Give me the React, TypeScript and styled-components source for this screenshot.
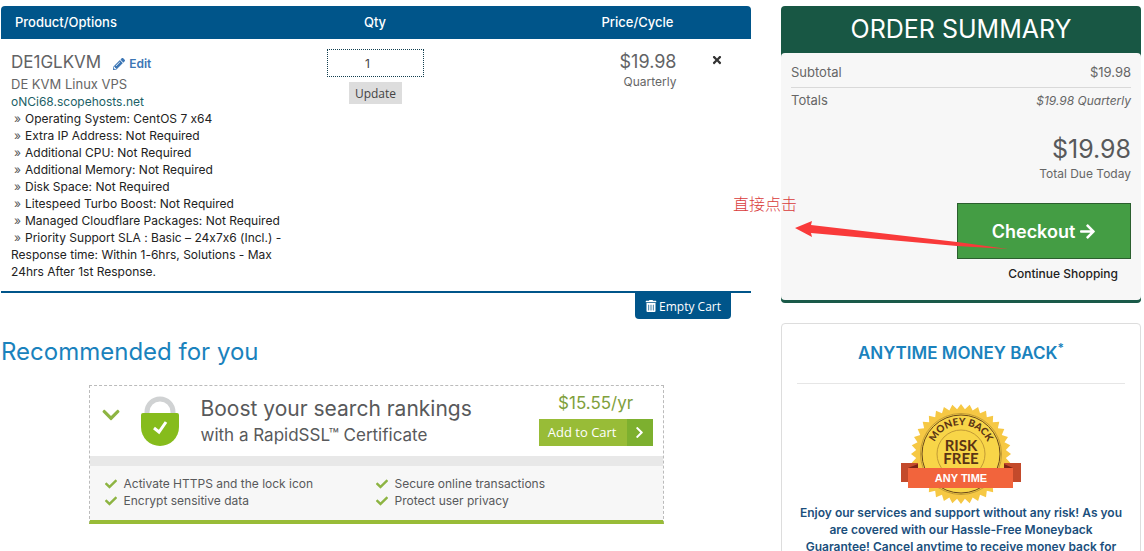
import React from 'react';
import styled, { createGlobalStyle } from 'styled-components';
import {
  FaArrowRight,
  FaCheck,
  FaChevronDown,
  FaChevronRight,
  FaPencilAlt,
  FaTimes,
  FaTrashAlt,
} from 'react-icons/fa';

const GlobalStyle = createGlobalStyle`
  *, *::before, *::after { box-sizing: border-box; }
  body {
    margin: 0;
    background: #fff;
    color: #222;
    font: 400 12px/17px Inter, "Liberation Sans", sans-serif;
    font-feature-settings: "calt" 0;
  }
  h1, h2, h3, p, ul, dl, dd { margin: 0; padding: 0; }
  ul { list-style: none; }
  button, input { font: inherit; margin: 0; }
  a { text-decoration: none; }
`;

const Page = styled.div`
  height: 100vh;
  overflow: hidden;
  display: grid;
  grid-template-columns: minmax(0, 25fr) minmax(0, 12fr);
  column-gap: 30px;
  padding: 6px 3px 0 1px;
`;

const Column = styled.div`
  min-width: 0;
`;

const CartTable = styled.table`
  width: 100%;
  table-layout: fixed;
  border-collapse: separate;
  border-spacing: 0;
  border-bottom: 2px solid #00558a;
`;

const HeadCell = styled.th<{ $width: string; $align?: string }>`
  width: ${(p) => p.$width};
  height: 33px;
  padding: 0 10px 0 ${(p) => (p.$align === 'center' ? '8px' : '14px')};
  background: #00558a;
  color: #fff;
  font-size: 13px;
  font-weight: 500;
  text-align: ${(p) => p.$align ?? 'left'};
  &:first-child { border-top-left-radius: 4px; }
  &:last-child { border-top-right-radius: 4px; }
`;

const Cell = styled.td<{ $align?: string }>`
  padding: 10px ${(p) => (p.$align === 'center' ? '11px' : '7px')} 11px 10px;
  vertical-align: top;
  text-align: ${(p) => p.$align ?? 'left'};
`;

const ProductTitle = styled.div`
  display: flex;
  align-items: center;
  gap: 12px;
  height: 27px;
  color: #626365;
  font-size: 17px;
`;

const EditLink = styled.a`
  display: flex;
  align-items: center;
  gap: 4px;
  padding-top: 2px;
  color: #3c76b5;
  font-size: 12px;
  font-weight: 600;
`;

const ProductGroup = styled.div`
  color: #666;
  font-size: 13px;
`;

const Domain = styled.div`
  color: #1c5f66;
`;

const Option = styled.li`
  &::before {
    content: "»";
    padding: 0 4px 0 3px;
    color: #555;
  }
`;

const QtyForm = styled.form`
  display: flex;
  flex-direction: column;
  align-items: center;
  gap: 5px;
`;

const QtyInput = styled.input`
  width: 97px;
  height: 28px;
  padding: 0 16px 0 0;
  border: 1px dotted #123f4f;
  background: #fff;
  color: #444;
  text-align: center;
`;

const UpdateButton = styled.button`
  height: 22px;
  padding: 0 6px;
  border: 0;
  background: #ddd;
  color: #444;
  font-family: "Open Sans", sans-serif;
`;

const Price = styled.div`
  height: 24px;
  color: #626365;
  font-size: 18px;
  line-height: 25px;
`;

const Cycle = styled.div`
  color: #666;
`;

const RemoveButton = styled.button`
  padding: 5px;
  border: 0;
  background: none;
  color: #333;
  line-height: 0;
`;

const EmptyRow = styled.div`
  display: flex;
  justify-content: flex-end;
  padding-right: 20px;
`;

const EmptyButton = styled.button`
  display: flex;
  align-items: center;
  gap: 2px;
  height: 26px;
  padding: 0 10px;
  border: 0;
  border-radius: 0 0 4px 4px;
  background: #00558a;
  color: #fff;
  font-family: "Open Sans", sans-serif;
`;

const SectionTitle = styled.h2`
  margin: 18px 0 19px;
  color: #1a82bd;
  font-size: 24px;
  font-weight: 400;
  line-height: 29px;
`;

const Promo = styled.section`
  max-width: 575px;
  margin: 0 auto;
  border: 1px dashed #bbb;
  border-bottom: 4px solid #98bc37;
  color: #58595b;
`;

const PromoTop = styled.div`
  display: flex;
  align-items: center;
  height: 70px;
  padding: 0 10px 0 11px;
`;

const PromoToggle = styled.button`
  margin-bottom: 12px;
  padding: 0;
  border: 0;
  background: none;
  color: #8db442;
  line-height: 0;
`;

const Lock = styled.svg`
  width: 38px;
  height: 50px;
  margin: 0 22px 0 20px;
`;

const PromoText = styled.div`
  flex: 1;
`;

const PromoHeading = styled.h3`
  font-size: 21px;
  font-weight: 400;
  line-height: 28px;
`;

const PromoSub = styled.p`
  font-size: 17px;
  line-height: 24px;
`;

const PromoBuy = styled.div`
  display: flex;
  flex-direction: column;
  align-items: center;
  gap: 4px;
  padding-bottom: 6px;
`;

const PromoPrice = styled.div`
  color: #7fa03c;
  font-size: 17px;
  line-height: 24px;
`;

const AddButton = styled.button`
  display: flex;
  align-items: stretch;
  height: 27px;
  padding: 0;
  border: 0;
  background: #98bc37;
  color: #fff;
  font-family: "Open Sans", sans-serif;
  font-size: 13px;
`;

const AddLabel = styled.span`
  padding: 0 10px 0 9px;
  line-height: 27px;
`;

const AddArrow = styled.span`
  display: flex;
  align-items: center;
  justify-content: center;
  width: 26px;
  background: #7db02f;
`;

const Features = styled.ul`
  display: grid;
  grid-template-columns: 271px 1fr;
  padding: 9px 15px 11px;
  border-top: 10px solid #e8e8e8;
  background: #f7f7f7;
`;

const Feature = styled.li`
  display: flex;
  align-items: center;
  gap: 7px;
  svg { color: #8db442; }
`;

const Summary = styled.section`
  position: relative;
  border-bottom: 3px solid #1a5a49;
  border-radius: 4px;
  background: #185744;
`;

const SummaryTitle = styled.h2`
  height: 47px;
  color: #fff;
  font-size: 25px;
  font-weight: 400;
  line-height: 47px;
  text-align: center;
`;

const SummaryBody = styled.div`
  padding: 11px 10px 18px;
  border-radius: 4px;
  background: #f7f7f7;
  color: #666;
`;

const SummaryLine = styled.div`
  display: flex;
  justify-content: space-between;
  height: 23px;
  font-size: 13px;
  em { font-size: 12px; }
  & + & {
    border-top: 1px solid #d9d9d9;
    padding-top: 4px;
    height: 49px;
  }
`;

const TotalDue = styled.div`
  padding-bottom: 21px;
  text-align: right;
  strong {
    display: block;
    height: 29px;
    color: #58595b;
    font-size: 25px;
    font-weight: 400;
    line-height: 26px;
  }
`;

const Actions = styled.div`
  display: flex;
  flex-direction: column;
  align-items: flex-end;
  gap: 6px;
`;

const CheckoutButton = styled.button`
  display: flex;
  align-items: center;
  justify-content: center;
  gap: 4px;
  width: 174px;
  height: 56px;
  border: 1px solid #2b5f2e;
  background: #449d44;
  color: #fff;
  font-size: 18px;
  font-weight: 600;
`;

const ContinueLink = styled.a`
  padding-right: 13px;
  color: #222;
  font-weight: 500;
`;

const Note = styled.span`
  position: absolute;
  top: 187px;
  left: -48px;
  color: #d93a3a;
  font-family: "Noto Sans CJK SC", sans-serif;
  font-size: 16px;
  font-weight: 300;
  line-height: 20px;
  white-space: nowrap;
`;

const NoteArrow = styled.svg`
  position: absolute;
  top: 214px;
  left: 14px;
  pointer-events: none;
`;

const Guarantee = styled.section`
  display: flex;
  flex-direction: column;
  align-items: center;
  margin-top: 20px;
  padding: 0 15px 20px;
  border: 1px solid #ddd;
  border-radius: 4px;
`;

const GuaranteeTitle = styled.h2`
  align-self: stretch;
  height: 60px;
  margin-bottom: 20px;
  border-bottom: 1px solid #e6e6e6;
  color: #1a82bd;
  font-size: 17px;
  font-weight: 600;
  line-height: 58px;
  text-align: center;
  sup { font-size: 12px; line-height: 0; }
`;

const GuaranteeText = styled.p`
  padding: 0 2px;
  color: #1b4f7c;
  font-weight: 600;
  text-align: center;
`;

const options = [
  'Operating System: CentOS 7 x64',
  'Extra IP Address: Not Required',
  'Additional CPU: Not Required',
  'Additional Memory: Not Required',
  'Disk Space: Not Required',
  'Litespeed Turbo Boost: Not Required',
  'Managed Cloudflare Packages: Not Required',
  'Priority Support SLA : Basic – 24x7x6 (Incl.) - Response time: Within 1-6hrs, Solutions - Max 24hrs After 1st Response.',
];

const features = [
  'Activate HTTPS and the lock icon',
  'Secure online transactions',
  'Encrypt sensitive data',
  'Protect user privacy',
];

const TEETH = 36;
const sealPoints = Array.from({ length: TEETH * 2 }, (_, i) => {
  const angle = (i * Math.PI) / TEETH;
  const r = i % 2 ? 45 : 50;
  return `${(60 + r * Math.sin(angle)).toFixed(2)},${(50 - r * Math.cos(angle)).toFixed(2)}`;
}).join(' ');

function Seal() {
  return (
    <svg width="120" height="100" viewBox="0 0 120 100" role="img" aria-label="Money back, risk free, any time">
      <defs>
        <path id="sealArc" d="M31 50a29 29 0 0 1 58 0" />
      </defs>
      <polygon points={sealPoints} fill="#f6c844" />
      <circle cx="60" cy="50" r="40.5" fill="#f8d548" stroke="#c29a35" strokeWidth="1" />
      <circle cx="60" cy="50" r="39" fill="none" stroke="#69461a" strokeWidth="1" />
      <circle cx="60" cy="50" r="24" fill="none" stroke="#c29a35" strokeWidth="1" />
      <text fill="#5b3415" fontFamily="Lato, sans-serif" fontWeight="900" fontSize="10" textAnchor="middle">
        <textPath href="#sealArc" startOffset="50%">MONEY BACK</textPath>
      </text>
      <g fill="#5b3415" fontFamily="Lato, sans-serif" fontWeight="700" fontSize="15" textAnchor="middle">
        <text x="60" y="47">RISK</text>
        <text x="60" y="60">FREE</text>
      </g>
      <path d="M0 59h17v19H0zM103 59h17v19h-17z" fill="#c34a2b" />
      <path d="M7 64l10-4v4zM112 64l-9-4v4z" fill="#7c2416" />
      <rect x="7" y="64" width="105" height="20" fill="#f2643c" />
      <text x="60" y="78" fill="#fff" fontFamily="'Liberation Sans', sans-serif" fontWeight="700" fontSize="11" textAnchor="middle">
        ANY TIME
      </text>
    </svg>
  );
}

export default function App() {
  return (
    <>
      <GlobalStyle />
      <Page>
        <Column>
          <CartTable>
            <thead>
              <tr>
                <HeadCell $width="40%">Product/Options</HeadCell>
                <HeadCell $width="20%" $align="center">Qty</HeadCell>
                <HeadCell $width="31%" $align="right">Price/Cycle</HeadCell>
                <HeadCell $width="9%" aria-label="Remove" />
              </tr>
            </thead>
            <tbody>
              <tr>
                <Cell>
                  <ProductTitle>
                    DE1GLKVM
                    <EditLink href="#edit"><FaPencilAlt size={12} />Edit</EditLink>
                  </ProductTitle>
                  <ProductGroup>DE KVM Linux VPS</ProductGroup>
                  <Domain>oNCi68.scopehosts.net</Domain>
                  <ul>
                    {options.map((o) => <Option key={o}>{o}</Option>)}
                  </ul>
                </Cell>
                <Cell $align="center">
                  <QtyForm onSubmit={(e) => e.preventDefault()}>
                    <QtyInput aria-label="Quantity" defaultValue="1" />
                    <UpdateButton type="submit">Update</UpdateButton>
                  </QtyForm>
                </Cell>
                <Cell $align="right">
                  <Price>$19.98</Price>
                  <Cycle>Quarterly</Cycle>
                </Cell>
                <Cell $align="center">
                  <RemoveButton type="button" aria-label="Remove item"><FaTimes size={12} /></RemoveButton>
                </Cell>
              </tr>
            </tbody>
          </CartTable>
          <EmptyRow>
            <EmptyButton type="button"><FaTrashAlt size={12} />Empty Cart</EmptyButton>
          </EmptyRow>

          <SectionTitle>Recommended for you</SectionTitle>
          <Promo>
            <PromoTop>
              <PromoToggle type="button" aria-label="Toggle details"><FaChevronDown size={20} /></PromoToggle>
              <Lock viewBox="0 0 38 50" aria-hidden="true">
                <path d="M6 20v-4a13 13 0 0 1 26 0v4" fill="none" stroke="#d0d2d3" strokeWidth="5" />
                <path d="M2 17h34a2 2 0 0 1 2 2v12a19 19 0 0 1-38 0V19a2 2 0 0 1 2-2z" fill="#86bc1c" />
                <path d="M13 32l5 4 7-10" fill="none" stroke="#fff" strokeWidth="3" />
              </Lock>
              <PromoText>
                <PromoHeading>Boost your search rankings</PromoHeading>
                <PromoSub>with a RapidSSL™ Certificate</PromoSub>
              </PromoText>
              <PromoBuy>
                <PromoPrice>$15.55/yr</PromoPrice>
                <AddButton type="button">
                  <AddLabel>Add to Cart</AddLabel>
                  <AddArrow><FaChevronRight size={13} /></AddArrow>
                </AddButton>
              </PromoBuy>
            </PromoTop>
            <Features>
              {features.map((f) => <Feature key={f}><FaCheck size={12} />{f}</Feature>)}
            </Features>
          </Promo>
        </Column>

        <Column>
          <Summary>
            <SummaryTitle>ORDER SUMMARY</SummaryTitle>
            <SummaryBody>
              <SummaryLine><span>Subtotal</span><span>$19.98</span></SummaryLine>
              <SummaryLine><span>Totals</span><em>$19.98 Quarterly</em></SummaryLine>
              <TotalDue><strong>$19.98</strong>Total Due Today</TotalDue>
              <Actions>
                <CheckoutButton type="button">Checkout <FaArrowRight size={17} /></CheckoutButton>
                <ContinueLink href="#shop">Continue Shopping</ContinueLink>
              </Actions>
            </SummaryBody>
            <Note>直接点击</Note>
            <NoteArrow width="214" height="32" viewBox="0 0 214 32" aria-hidden="true">
              <path d="M0 8L17 1l-1 4 146 17 51 7-51-3L16 13l1 4z" fill="#f93a3a" />
            </NoteArrow>
          </Summary>

          <Guarantee>
            <GuaranteeTitle>ANYTIME MONEY BACK<sup>*</sup></GuaranteeTitle>
            <Seal />
            <GuaranteeText>
              Enjoy our services and support without any risk! As you are covered with our
              Hassle-Free Moneyback Guarantee! Cancel anytime to receive money back for
            </GuaranteeText>
          </Guarantee>
        </Column>
      </Page>
    </>
  );
}
